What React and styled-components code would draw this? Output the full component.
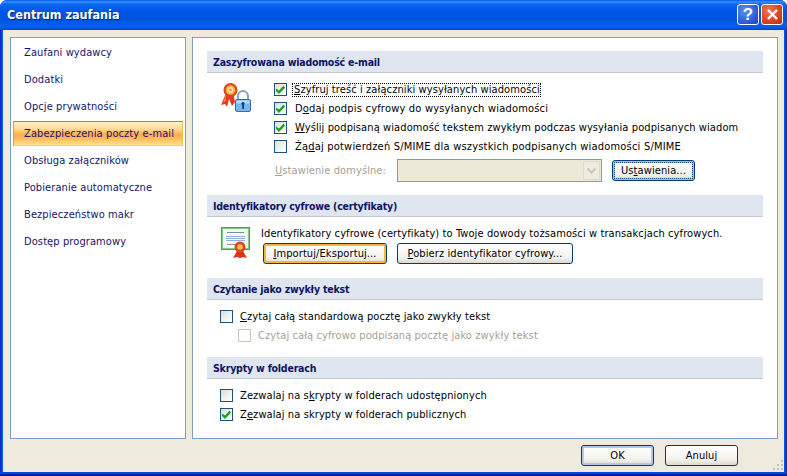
import styled, { createGlobalStyle } from "styled-components";

const GlobalStyle = createGlobalStyle`
  html, body {
    margin: 0;
    padding: 0;
    background: #fff;
    overflow: hidden;
  }
  * {
    box-sizing: border-box;
  }
`;

const NAV_ITEMS = [
  "Zaufani wydawcy",
  "Dodatki",
  "Opcje prywatności",
  "Zabezpieczenia poczty e-mail",
  "Obsługa załączników",
  "Pobieranie automatyczne",
  "Bezpieczeństwo makr",
  "Dostęp programowy",
];

const RibbonLockIcon = () => (
  <svg width="32" height="30" viewBox="0 0 32 30">
    <path d="M6 10 L1 22 L5 21 L7 24 L9 16 L12 23 L15 19 L13 9 Z" fill="#e63a1a" />
    <path d="M6 11 L3 20 L6 18 Z" fill="#f47a55" />
    <circle cx="10.5" cy="7" r="7" fill="#e2421e" />
    <circle cx="10.5" cy="7" r="4.8" fill="#f4b53e" />
    <circle cx="10.5" cy="7" r="2.8" fill="#fdeab0" />
    <circle cx="10.5" cy="7" r="1.4" fill="#f49a3a" />
    <path d="M18 17 v-4 a5 5 0 0 1 10 0 v4" fill="none" stroke="#8fa0b4" strokeWidth="2" />
    <rect x="15.5" y="16.5" width="15" height="12" rx="1.5" fill="#79b6ec" stroke="#3a6ea6" />
    <rect x="16.5" y="17.5" width="13" height="3" fill="#b7dafa" />
    <rect x="22.2" y="20" width="1.8" height="6" fill="#123f75" />
    <circle cx="23" cy="20.5" r="1.6" fill="#123f75" />
  </svg>
);

const CertificateIcon = () => (
  <svg width="30" height="32" viewBox="0 0 30 32">
    <rect x="0.5" y="0.5" width="28" height="22" fill="#e8f0f0" stroke="#4f9a57" />
    <rect x="1.5" y="1.5" width="26" height="20" fill="none" stroke="#8cc98f" />
    <rect x="3" y="3" width="23" height="18" fill="#f5f8fb" />
    <path d="M6 5.5 h17" stroke="#7f8c9b" />
    <path d="M5 9.5 h19 M5 11.5 h19 M5 13.5 h19" stroke="#8fb0dc" />
    <path d="M6 17.5 h9" stroke="#8b97a5" />
    <path d="M16 24 L12 31 L16 30 L19 31 L22 30 L26 31 L22 24 Z" fill="#d9351c" />
    <circle cx="19" cy="20" r="5.5" fill="#e2441f" />
    <circle cx="19" cy="20" r="2.8" fill="#f4c04e" />
  </svg>
);

const App = () => (
  <>
    <GlobalStyle />
    <Window>
      <TitleBar>
        <Title>Centrum zaufania</Title>
        <CaptionButton $tone="help" aria-label="Pomoc">?</CaptionButton>
        <CaptionButton $tone="close" aria-label="Zamknij">
          <svg width="13" height="13" viewBox="0 0 13 13">
            <path d="M2 2 L11 11 M11 2 L2 11" stroke="#fff" strokeWidth="2.4" />
          </svg>
        </CaptionButton>
      </TitleBar>
      <Client>
        <Panels>
          <Sidebar>
            {NAV_ITEMS.map((item, i) => (
              <NavItem key={item} $active={i === 3}>{item}</NavItem>
            ))}
          </Sidebar>
          <Main>
            <SectionHeader>Zaszyfrowana wiadomość e-mail</SectionHeader>
            <EncryptedBody>
              <IconSlot $width={54} $top={3}><RibbonLockIcon /></IconSlot>
              <CheckList>
                <WideRow>
                  <Check $on />
                  <Label $focus><u>S</u>zyfruj treść i załączniki wysyłanych wiadomości</Label>
                </WideRow>
                <WideRow>
                  <Check $on />
                  <Label $track={0.2}>D<u>o</u>daj podpis cyfrowy do wysyłanych wiadomości</Label>
                </WideRow>
                <WideRow>
                  <Check $on />
                  <Label><u>W</u>yślij podpisaną wiadomość tekstem zwykłym podczas wysyłania podpisanych wiadomości</Label>
                </WideRow>
                <WideRow>
                  <Check />
                  <Label $track={0.2}>Żą<u>d</u>aj potwierdzeń S/MIME dla wszystkich podpisanych wiadomości S/MIME</Label>
                </WideRow>
                <SettingsRow>
                  <SettingsLabel><u>U</u>stawienie domyślne:</SettingsLabel>
                  <Select>
                    <SelectArrow>
                      <svg width="11" height="8" viewBox="0 0 11 8">
                        <path d="M1.5 1.5 L5.5 5.5 L9.5 1.5" fill="none" stroke="#c9c7ba" strokeWidth="2" />
                      </svg>
                    </SelectArrow>
                  </Select>
                  <Button $width={83} $state="focus">Us<u>t</u>awienia...</Button>
                </SettingsRow>
              </CheckList>
            </EncryptedBody>

            <SectionHeader>Identyfikatory cyfrowe (certyfikaty)</SectionHeader>
            <CertBody>
              <IconSlot $width={40} $top={1}><CertificateIcon /></IconSlot>
              <CertContent>
                <CertText>Identyfikatory cyfrowe (certyfikaty) to Twoje dowody tożsamości w transakcjach cyfrowych.</CertText>
                <ButtonRow>
                  <Button $width={124} $state="hot"><u>I</u>mportuj/Eksportuj...</Button>
                  <Button $width={176}><u>P</u>obierz identyfikator cyfrowy...</Button>
                </ButtonRow>
              </CertContent>
            </CertBody>

            <SectionHeader>Czytanie jako zwykły tekst</SectionHeader>
            <PlainBody>
              <CheckRow>
                <Check />
                <Label><u>C</u>zytaj całą standardową pocztę jako zwykły tekst</Label>
              </CheckRow>
              <NestedRow>
                <Check $disabled />
                <Label $muted>Czytaj całą cyfrowo podpisaną pocztę jako zwykły tekst</Label>
              </NestedRow>
            </PlainBody>

            <SectionHeader>Skrypty w folderach</SectionHeader>
            <ScriptBody>
              <CheckRow>
                <Check />
                <Label>Zezwalaj na s<u>k</u>rypty w folderach udostępnionych</Label>
              </CheckRow>
              <CheckRow>
                <Check $on />
                <Label>Z<u>e</u>zwalaj na skrypty w folderach publicznych</Label>
              </CheckRow>
            </ScriptBody>
          </Main>
        </Panels>
        <Footer>
          <Button $width={73} $state="default">OK</Button>
          <Button $width={73}>Anuluj</Button>
          <Grip>
            <svg width="10" height="10" viewBox="0 0 10 10">
              <path d="M8 0h2v2H8z M4 4h2v2H4z M8 4h2v2H8z M0 8h2v2H0z M4 8h2v2H4z M8 8h2v2H8z" fill="#c5c2b4" />
            </svg>
          </Grip>
        </Footer>
      </Client>
    </Window>
  </>
);

const Window = styled.div`
  position: relative;
  width: 787px;
  height: 476px;
  display: flex;
  flex-direction: column;
  overflow: hidden;
  border-radius: 7px 7px 0 0;
  background:
    linear-gradient(180deg, transparent 472px, #0048e2 472px, #0048e2 474px, #001c9a 474px),
    linear-gradient(90deg, #0019cf 0, #0855dd 2px, #0855dd 785px, #0019cf 787px);
  font-family: "DejaVu Sans Condensed", "DejaVu Sans", sans-serif;
  font-stretch: condensed;
  font-size: 11px;
  letter-spacing: 0.1px;
  color: #000;
`;

const TitleBar = styled.div`
  height: 30px;
  flex: none;
  display: flex;
  align-items: center;
  padding: 0 4px 1px 7px;
  gap: 2px;
  background: linear-gradient(
    180deg,
    #0058ee 0,
    #3a93ff 2px,
    #0a66f0 4px,
    #0055e5 12px,
    #0053dc 20px,
    #0262f0 26px,
    #0050dd 29px,
    #003cc0 30px
  );
`;

const Title = styled.div`
  flex: 1;
  color: #fff;
  font-weight: 700;
  font-size: 12.5px;
  letter-spacing: 0;
  text-shadow: 1px 1px 0 #0a1f7a;
`;

const CaptionButton = styled.div`
  width: 22px;
  height: 21px;
  display: flex;
  align-items: center;
  justify-content: center;
  border: 1px solid #fff;
  border-radius: 3px;
  color: #fff;
  font-family: "Liberation Sans", sans-serif;
  font-stretch: normal;
  font-weight: 700;
  font-size: 17px;
  background: ${(p) =>
    p.$tone === "close"
      ? "radial-gradient(circle at 35% 30%, #ec7a58, #d8431f 60%, #b82c0c)"
      : "radial-gradient(circle at 35% 30%, #5f8cf0, #2f5fdc 60%, #1c41bb)"};
`;

const Client = styled.div`
  flex: 1;
  min-height: 0;
  margin: 0 3px 4px;
  display: flex;
  flex-direction: column;
  background: #eeeade;
`;

const Panels = styled.div`
  height: 402px;
  margin-top: 7px;
  padding: 0 6px 0 7px;
  display: flex;
  gap: 6px;
`;

const Sidebar = styled.nav`
  width: 176px;
  flex: none;
  display: flex;
  flex-direction: column;
  gap: 2px;
  padding: 2px 2px 0;
  background: #fff;
  border: 1px solid #7f9fc4;
`;

const NavItem = styled.div`
  height: 25px;
  display: flex;
  align-items: center;
  padding-left: 11px;
  color: #15156a;
  white-space: nowrap;
  ${(p) =>
    p.$active &&
    `
    padding-left: 10px;
    border: 1px solid;
    border-color: #9a8a64 #ecc24e #f7d268 #c2a25a;
    background: linear-gradient(180deg, #fff1c4 0, #ffd99a 30%, #ffac4a 55%, #ffb95c 70%, #ffe08c 100%);
  `}
`;

const Main = styled.main`
  flex: 1;
  min-width: 0;
  display: flex;
  flex-direction: column;
  padding: 13px 14px 0;
  background: #fff;
  border: 1px solid #7f9fc4;
`;

const SectionHeader = styled.div`
  height: 22px;
  flex: none;
  display: flex;
  align-items: center;
  padding-left: 6px;
  background: #dfe6ef;
  border-bottom: 1px solid #c5c9d0;
  color: #0c1564;
  font-weight: 700;
  font-size: 10.5px;
  letter-spacing: -0.2px;
`;

const EncryptedBody = styled.div`
  height: 122px;
  display: flex;
  padding: 7px 0 0 13px;
`;

const IconSlot = styled.div`
  width: ${(p) => p.$width}px;
  flex: none;
  padding-top: ${(p) => p.$top}px;
`;

const CheckList = styled.div`
  flex: 1;
  min-width: 0;
  padding-right: 25px;
  display: flex;
  flex-direction: column;
`;

const CheckRow = styled.div`
  height: 19px;
  display: flex;
  align-items: center;
  gap: 7px;
  overflow: hidden;
  white-space: nowrap;
`;

const WideRow = styled(CheckRow)`
  gap: 8px;
`;

const Label = styled.span`
  white-space: nowrap;
  color: ${(p) => (p.$muted ? "#a4a294" : "#000")};
  ${(p) => p.$track && `letter-spacing: ${p.$track}px;`}
  ${(p) =>
    p.$focus &&
    `
    margin-left: -3px;
    padding: 0 1px 0 2px;
    line-height: 14px;
    outline: 1px dotted #000;
    outline-offset: -1px;
  `}
`;

const Check = styled.span`
  position: relative;
  flex: none;
  width: 13px;
  height: 13px;
  border: 1px solid ${(p) => (p.$disabled ? "#cac8bb" : "#1c5180")};
  background: ${(p) =>
    p.$disabled
      ? "#fff"
      : "linear-gradient(135deg, #dcdcd7 0, #f4f4f0 60%, #fff 100%)"};
  ${(p) =>
    p.$on &&
    `
    &::after {
      content: "";
      position: absolute;
      left: 1px;
      top: 1px;
      width: 9px;
      height: 9px;
      background: #21a121;
      clip-path: polygon(0 40%, 33% 62%, 85% 5%, 100% 30%, 33% 100%, 0 68%);
    }
  `}
`;

const SettingsRow = styled.div`
  margin-top: 3px;
  padding-left: 1px;
  display: flex;
  align-items: center;
`;

const SettingsLabel = styled.span`
  width: 122px;
  flex: none;
  white-space: nowrap;
  color: #a4a294;
`;

const Select = styled.div`
  width: 205px;
  height: 23px;
  margin-right: 10px;
  display: flex;
  justify-content: flex-end;
  align-items: stretch;
  padding: 1px;
  background: #ece9d8;
  border: 1px solid #7f9db9;
`;

const SelectArrow = styled.div`
  width: 17px;
  display: flex;
  align-items: center;
  justify-content: center;
  background: #eeebe0;
  border: 1px solid #dedbcd;
`;

const buttonStates = {
  hot: "box-shadow: inset 0 0 0 2px #f8b636;",
  default: "box-shadow: inset 0 0 0 2px #b4c8ee;",
  focus:
    "box-shadow: inset 0 0 0 2px #f0b64a; outline: 1px dotted #1c3f78; outline-offset: -3px;",
};

const Button = styled.button`
  width: ${(p) => p.$width}px;
  height: 21px;
  flex: none;
  padding: 0;
  font: inherit;
  font-stretch: condensed;
  letter-spacing: 0.1px;
  color: #000;
  border: 1px solid #003c74;
  border-radius: 3px;
  background: linear-gradient(180deg, #fff 0, #f4f3ee 70%, #dcd8cf 100%);
  ${(p) => buttonStates[p.$state] || ""}
`;

const CertBody = styled.div`
  height: 61px;
  display: flex;
  padding: 9px 0 0 14px;
`;

const CertContent = styled.div`
  flex: 1;
  min-width: 0;
  display: flex;
  flex-direction: column;
`;

const CertText = styled.div`
  height: 17px;
  line-height: 15px;
  white-space: nowrap;
`;

const ButtonRow = styled.div`
  padding-left: 2px;
  display: flex;
  gap: 10px;
`;

const PlainBody = styled.div`
  height: 57px;
  display: flex;
  flex-direction: column;
  padding: 7px 0 0 13px;
`;

const NestedRow = styled(CheckRow)`
  margin-left: 18px;
`;

const ScriptBody = styled.div`
  padding: 7px 0 0 13px;
  display: flex;
  flex-direction: column;
`;

const Footer = styled.div`
  position: relative;
  flex: 1;
  display: flex;
  justify-content: flex-end;
  gap: 11px;
  padding: 6px 46px 0 0;
`;

const Grip = styled.div`
  position: absolute;
  right: 1px;
  bottom: 2px;
  width: 10px;
  height: 10px;
`;

export default App;
